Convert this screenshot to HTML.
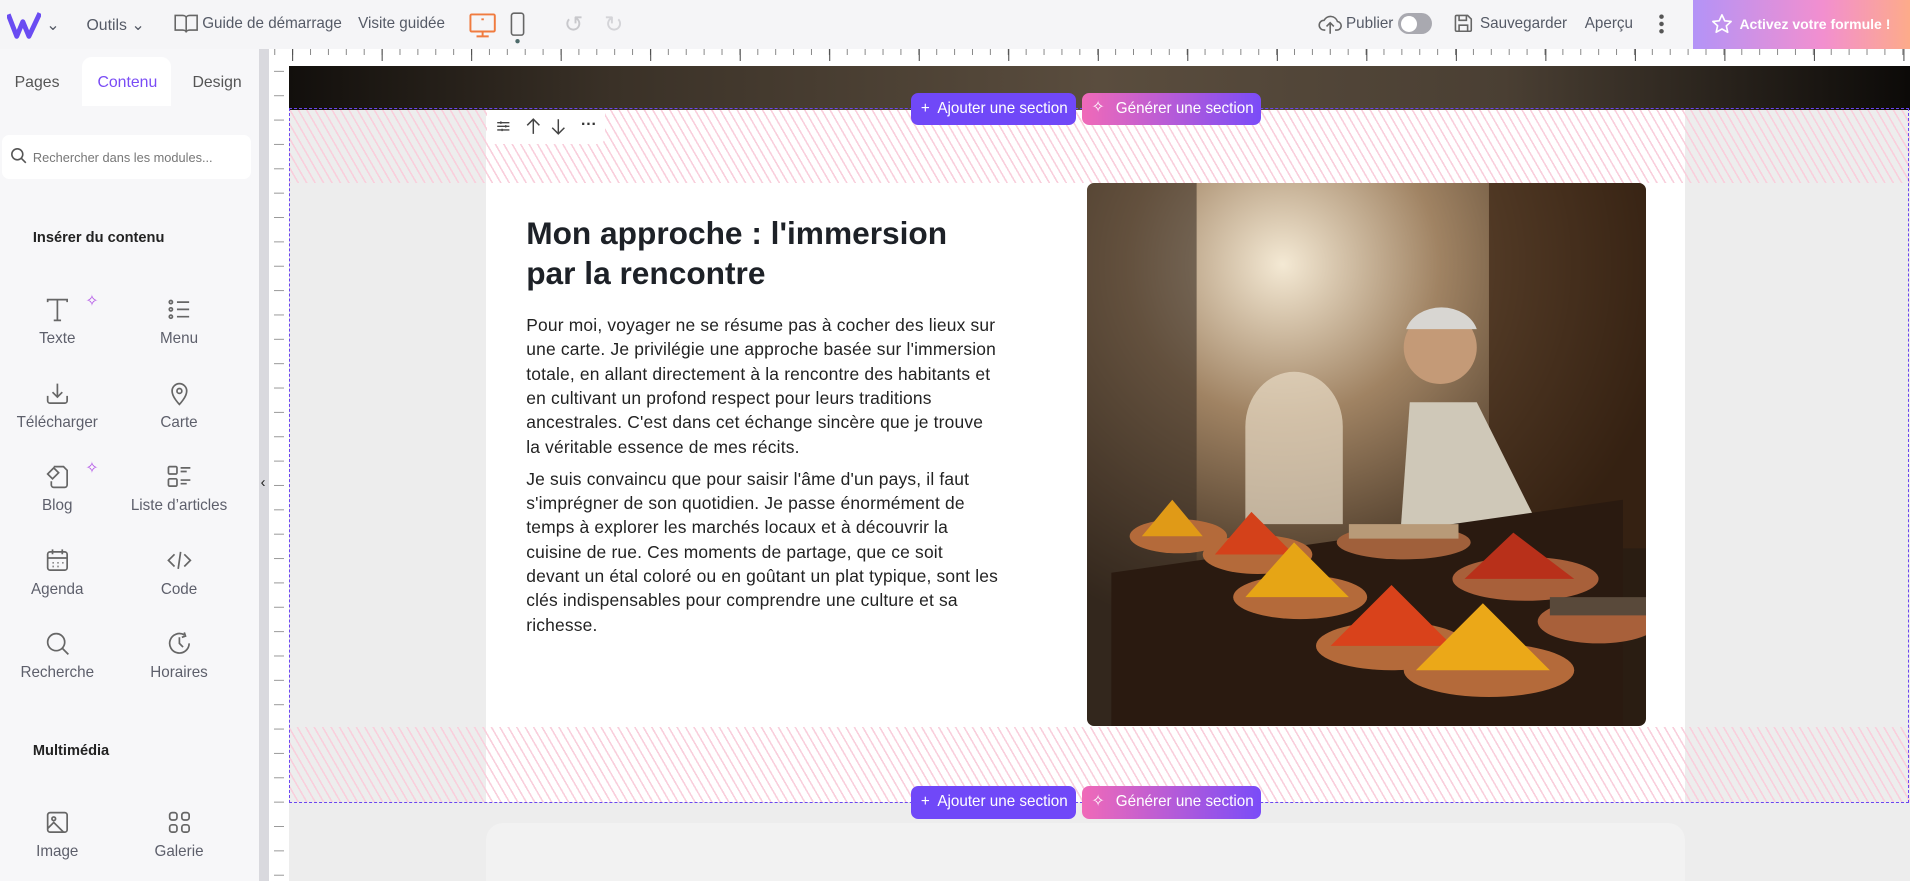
<!DOCTYPE html>
<html><head><meta charset="utf-8"><style>
*{box-sizing:border-box;margin:0;padding:0}
html,body{width:1910px;height:881px;overflow:hidden}
body{zoom:1.2181;font-family:"Liberation Sans",sans-serif;background:#ededed;position:relative;width:1568px;height:723px}
.a{position:absolute}
.top{left:0;top:0;width:1568px;height:40px;background:#f5f5f7}
.tt{font-size:13px;color:#555a66;white-space:nowrap}
.side{left:0;top:40px;width:213px;height:683px;background:#f7f7f9}
.scr{left:213px;top:40px;width:8px;height:683px;background:#d9d9de}
.it{position:absolute;width:100px;text-align:center;font-size:12.5px;color:#5d5f6b}
.it svg{display:block;margin:0 auto 6px}
.hatch{background:repeating-linear-gradient(60deg,#f9cfdc 0 1.3px,transparent 1.3px 6px)}
.btn{height:27px;border-radius:6px;color:#fff;font-size:12.5px;line-height:27px;padding:0 8px;white-space:nowrap;overflow:hidden}
p.b{font-size:14.3px;line-height:20px;color:#222;margin-bottom:6px;letter-spacing:0.15px}
</style></head><body>
<div class="a top"></div>
<svg class="a" style="left:6px;top:10px" width="28" height="22" viewBox="0 0 28 22"><path d="M1 2 L8 20 L13 8 L18 20 L27 1" fill="none" stroke="#6a4cf2" stroke-width="4" stroke-linejoin="round"/></svg>
<div class="a tt" style="left:38px;top:12px">⌄</div>
<div class="a tt" style="left:71px;top:12px">Outils ⌄</div>
<svg class="a" style="left:143px;top:11px" width="20" height="17" viewBox="0 0 20 17"><path d="M1 2h6c2 0 3 1 3 2v12c0-1-1-2-3-2H1zM19 2h-6c-2 0-3 1-3 2v12c0-1 1-2 3-2h6z" fill="none" stroke="#666" stroke-width="1.3"/></svg>
<div class="a tt" style="left:166px;top:12px;font-size:12.5px">Guide de démarrage</div>
<div class="a tt" style="left:294px;top:12px;font-size:12.5px">Visite guidée</div>
<svg class="a" style="left:384px;top:10px" width="24" height="22" viewBox="0 0 24 22"><rect x="2" y="2" width="20" height="14" rx="1" fill="none" stroke="#f07b3f" stroke-width="1.6"/><path d="M12 16v4M7 20h10M11 6h2" stroke="#f07b3f" stroke-width="1.6"/></svg>
<svg class="a" style="left:418px;top:10px" width="14" height="26" viewBox="0 0 14 26"><rect x="2" y="1" width="10" height="18" rx="2" fill="none" stroke="#666" stroke-width="1.3"/><circle cx="7" cy="24" r="1.8" fill="#4d6a6a"/></svg>
<div class="a" style="left:463px;top:9px;font-size:19px;color:#c8c8cc">↺</div>
<div class="a" style="left:496px;top:9px;font-size:19px;color:#d4d4d8">↻</div>
<svg class="a" style="left:1082px;top:11px" width="20" height="18" viewBox="0 0 20 18"><path d="M6 14H5a4 4 0 0 1 0-8 6 6 0 0 1 11 1 3.5 3.5 0 0 1-1 7h-1M10 8v9M7 11l3-3 3 3" fill="none" stroke="#666" stroke-width="1.3"/></svg>
<div class="a tt" style="left:1105px;top:12px;font-size:12.5px">Publier</div>
<div class="a" style="left:1148px;top:11px;width:28px;height:17px;border-radius:9px;background:#a9a9b0"><div style="margin:2px;width:13px;height:13px;border-radius:50%;background:#fff"></div></div>
<svg class="a" style="left:1193px;top:11px" width="17" height="17" viewBox="0 0 17 17"><path d="M2 3a1 1 0 0 1 1-1h9l3 3v9a1 1 0 0 1-1 1H3a1 1 0 0 1-1-1zM5 2v4h6V2M5 15v-5h7v5" fill="none" stroke="#666" stroke-width="1.3"/></svg>
<div class="a tt" style="left:1215px;top:12px;font-size:12.5px">Sauvegarder</div>
<div class="a tt" style="left:1301px;top:12px;font-size:12.5px">Aperçu</div>
<div class="a" style="left:1362px;top:11px;width:4px;height:18px;background:radial-gradient(circle,#555 1.6px,transparent 2px) 0 0/4px 6px"></div>
<div class="a" style="left:1390px;top:0;width:178px;height:40px;background:linear-gradient(90deg,#b393f7,#f28fcf 60%,#fdab8a);color:#fff;font-size:11.5px;font-weight:bold;line-height:40px;padding-left:38px;white-space:nowrap">Activez votre formule !</div>
<svg class="a" style="left:1405px;top:11px" width="18" height="18" viewBox="0 0 24 24"><path d="M12 2l3 6.5 7 .8-5.2 4.8 1.5 7L12 17.5 5.7 21l1.5-7L2 9.3l7-.8z" fill="none" stroke="#fff" stroke-width="1.8" stroke-linejoin="round"/></svg>

<div class="a side"></div>
<div class="a" style="left:67px;top:47px;width:73px;height:40px;background:#fff;border-radius:8px 8px 0 0"></div>
<div class="a" style="left:12px;top:61px;font-size:13px;color:#555">Pages</div>
<div class="a" style="left:80px;top:61px;font-size:13px;color:#7a4cf5">Contenu</div>
<div class="a" style="left:158px;top:61px;font-size:13px;color:#555">Design</div>
<div class="a" style="left:2px;top:111px;width:204px;height:36px;background:#fff;border-radius:6px"></div>
<svg class="a" style="left:8px;top:121px" width="14" height="14" viewBox="0 0 14 14"><circle cx="6" cy="6" r="4.5" fill="none" stroke="#555" stroke-width="1.3"/><path d="M9.5 9.5L13 13" stroke="#555" stroke-width="1.3"/></svg>
<div class="a" style="left:27px;top:123px;font-size:10.5px;color:#777">Rechercher dans les modules...</div>
<div class="a" style="left:27px;top:189px;font-size:12px;font-weight:bold;color:#222">Insérer du contenu</div>
<div class="a" style="left:27px;top:610px;font-size:12px;font-weight:bold;color:#222">Multimédia</div>
<div class="it" style="left:-3px;top:243px"><svg width="22" height="22" viewBox="0 0 22 22" fill="none" stroke="#666" stroke-width="1.4"><path d="M3 5V3h16v2M11 3v17M8 20h6"/></svg>Texte</div>
<div class="it" style="left:97px;top:243px"><svg width="22" height="22" viewBox="0 0 22 22" fill="none" stroke="#666" stroke-width="1.4"><circle cx="4" cy="5" r="1.3"/><circle cx="4" cy="11" r="1.3"/><circle cx="4" cy="17" r="1.3"/><path d="M9 5h10M9 11h10M9 17h10"/></svg>Menu</div>
<div class="it" style="left:-3px;top:312px"><svg width="22" height="22" viewBox="0 0 22 22" fill="none" stroke="#666" stroke-width="1.4"><path d="M11 3v11M7 10l4 4 4-4M3 13v4a2 2 0 0 0 2 2h12a2 2 0 0 0 2-2v-4"/></svg>Télécharger</div>
<div class="it" style="left:97px;top:312px"><svg width="22" height="22" viewBox="0 0 22 22" fill="none" stroke="#666" stroke-width="1.4"><path d="M11 20s-6-6-6-11a6 6 0 0 1 12 0c0 5-6 11-6 11z"/><circle cx="11" cy="9" r="2"/></svg>Carte</div>
<div class="it" style="left:-3px;top:380px"><svg width="22" height="22" viewBox="0 0 22 22" fill="none" stroke="#666" stroke-width="1.4"><path d="M8 3h8l3 3v12a2 2 0 0 1-2 2h-9a2 2 0 0 1-2-2v-3M3 9l5-5 4 4-5 5z"/></svg>Blog</div>
<div class="it" style="left:97px;top:380px"><svg width="22" height="22" viewBox="0 0 22 22" fill="none" stroke="#666" stroke-width="1.4"><rect x="2" y="3" width="7" height="6" rx="1"/><rect x="2" y="13" width="7" height="6" rx="1"/><path d="M12 4h8M12 7h5M12 14h8M12 17h5"/></svg>Liste d’articles</div>
<div class="it" style="left:-3px;top:449px"><svg width="22" height="22" viewBox="0 0 22 22" fill="none" stroke="#666" stroke-width="1.4"><rect x="3" y="4" width="16" height="15" rx="2"/><path d="M3 9h16M7 2v4M15 2v4M7 13h1M11 13h1M15 13h1M7 16h1M11 16h1"/></svg>Agenda</div>
<div class="it" style="left:97px;top:449px"><svg width="22" height="22" viewBox="0 0 22 22" fill="none" stroke="#666" stroke-width="1.4"><path d="M7 6l-5 5 5 5M15 6l5 5-5 5M12 4l-2 14"/></svg>Code</div>
<div class="it" style="left:-3px;top:517px"><svg width="22" height="22" viewBox="0 0 22 22" fill="none" stroke="#666" stroke-width="1.4"><circle cx="10" cy="10" r="7"/><path d="M15 15l5 5"/></svg>Recherche</div>
<div class="it" style="left:97px;top:517px"><svg width="22" height="22" viewBox="0 0 22 22" fill="none" stroke="#666" stroke-width="1.4"><path d="M19 11a8 8 0 1 1-4-7M11 6v5l3 3M15 2l1 3-3 1"/></svg>Horaires</div>
<div class="it" style="left:-3px;top:664px"><svg width="22" height="22" viewBox="0 0 22 22" fill="none" stroke="#666" stroke-width="1.4"><rect x="3" y="3" width="16" height="16" rx="2"/><circle cx="8" cy="8" r="1.5"/><path d="M3 16l5-5 8 8"/></svg>Image</div>
<div class="it" style="left:97px;top:664px"><svg width="22" height="22" viewBox="0 0 22 22" fill="none" stroke="#666" stroke-width="1.4"><rect x="3" y="3" width="6" height="6" rx="2"/><rect x="13" y="3" width="6" height="6" rx="2"/><rect x="3" y="13" width="6" height="6" rx="2"/><rect x="13" y="13" width="6" height="6" rx="2"/></svg>Galerie</div>
<div class="a" style="left:70px;top:239px;color:#b458e8;font-size:13px">✧</div>
<div class="a" style="left:70px;top:376px;color:#b458e8;font-size:13px">✧</div>
<div class="a scr"></div>
<div class="a" style="left:214px;top:390px;font-size:12px;color:#222">‹</div>

<!-- rulers -->
<div class="a" style="left:221px;top:40px;width:1347px;height:14px;background:#fff repeating-linear-gradient(90deg,#888 0 1px,transparent 1px 14.7px);background-size:14.7px 5px;background-repeat:repeat-x;background-position:19px 0"></div>
<div class="a" style="left:221px;top:40px;width:1347px;height:14px;background:repeating-linear-gradient(90deg,#444 0 1px,transparent 1px 73.5px);background-size:73.5px 10px;background-repeat:repeat-x;background-position:19px 0"></div>
<div class="a" style="left:221px;top:54px;width:16px;height:669px;background:#fff repeating-linear-gradient(180deg,#999 0 1px,transparent 1px 20px);background-size:8px 20px;background-repeat:repeat-y;background-position:4px 4px"></div>

<!-- canvas -->
<div class="a" style="left:237px;top:54px;width:1331px;height:36px;background:linear-gradient(90deg,#120f0c,#3a3127 20%,#5a4d3e 50%,#4a3f33 75%,#0c0a08)"></div>
<div class="a" style="left:237px;top:90px;width:1331px;height:568px;background:#ededed"></div>
<div class="a" style="left:399px;top:90px;width:984px;height:568px;background:#fff"></div>
<div class="a hatch" style="left:237px;top:90px;width:1331px;height:60px"></div>
<div class="a hatch" style="left:237px;top:597px;width:1331px;height:61px"></div>
<div class="a" style="left:237px;top:89px;width:1330px;height:570px;border:1.5px dashed #6b46f0"></div>
<div class="a" style="left:399px;top:676px;width:984px;height:47px;background:#f2f2f2;border-radius:14px 14px 0 0"></div>

<div class="a" style="left:400px;top:90px;width:97px;height:28px;background:#fff;border-radius:0 0 6px 6px;font-size:13px;color:#333">
<svg class="a" style="left:7px;top:8px" width="12" height="12" viewBox="0 0 12 12" fill="none" stroke="#444" stroke-width="1.1"><path d="M1 3h10M1 6h10M1 9h10M4 2v2M8 5v2M5 8v2"/></svg>
<svg class="a" style="left:32px;top:7px" width="12" height="14" viewBox="0 0 12 14" fill="none" stroke="#444" stroke-width="1.2"><path d="M6 13V1M1 6l5-5 5 5"/></svg>
<svg class="a" style="left:52px;top:7px" width="12" height="14" viewBox="0 0 12 14" fill="none" stroke="#444" stroke-width="1.2"><path d="M6 1v12M1 8l5 5 5-5"/></svg>
<span class="a" style="left:77px;top:5px;font-weight:bold">···</span></div>
<div class="a btn" style="left:748px;top:76px;width:135px;background:#7048f8">+&nbsp; Ajouter une section</div>
<div class="a btn" style="left:888px;top:76px;width:147px;background:linear-gradient(90deg,#f06ab8,#7a4cf8);padding-left:28px">Générer une section</div>
<div class="a" style="left:896px;top:80px;color:#fff;font-size:13px">✧</div>
<div class="a btn" style="left:748px;top:645px;width:135px;background:#7048f8">+&nbsp; Ajouter une section</div>
<div class="a btn" style="left:888px;top:645px;width:147px;background:linear-gradient(90deg,#f06ab8,#7a4cf8);padding-left:28px">Générer une section</div>
<div class="a" style="left:896px;top:649px;color:#fff;font-size:13px">✧</div>

<div class="a" style="left:432px;top:175px;width:370px;font-size:26px;font-weight:bold;line-height:33px;color:#1d2127">Mon approche : l'immersion par la rencontre</div>
<div class="a" style="left:432px;top:257px;width:388px">
<p class="b">Pour moi, voyager ne se résume pas à cocher des lieux sur une carte. Je privilégie une approche basée sur l'immersion totale, en allant directement à la rencontre des habitants et en cultivant un profond respect pour leurs traditions ancestrales. C'est dans cet échange sincère que je trouve la véritable essence de mes récits.</p>
<p class="b">Je suis convaincu que pour saisir l'âme d'un pays, il faut s'imprégner de son quotidien. Je passe énormément de temps à explorer les marchés locaux et à découvrir la cuisine de rue. Ces moments de partage, que ce soit devant un étal coloré ou en goûtant un plat typique, sont les clés indispensables pour comprendre une culture et sa richesse.</p>
</div>

<svg class="a" style="left:892px;top:150px;border-radius:6px" width="459" height="446" viewBox="0 0 459 446">
<defs><radialGradient id="g" cx="0.35" cy="0.15" r="0.7"><stop offset="0" stop-color="#f4e9d4"/><stop offset="0.4" stop-color="#a08363"/><stop offset="1" stop-color="#2a1d12"/></radialGradient></defs>
<rect width="459" height="446" fill="url(#g)"/>
<rect x="0" y="0" width="90" height="446" fill="#3a2e24" opacity="0.6"/>
<rect x="330" y="0" width="129" height="300" fill="#3a2412" opacity="0.7"/>
<path d="M130 200a40 45 0 0 1 80 0v80h-80z" fill="#e8dcc6" opacity="0.7"/>
<path d="M265 180h55l70 140H255z" fill="#cfc8b8"/>
<circle cx="290" cy="135" r="30" fill="#c49a77"/>
<path d="M262 120a30 24 0 0 1 58 0" fill="#d8d6d2"/>
<path d="M20 320l420-60v186H20z" fill="#2a1a10"/>
<ellipse cx="75" cy="290" rx="40" ry="14" fill="#b46a3a"/><path d="M45 290l25-30 25 30z" fill="#e09a17"/>
<ellipse cx="140" cy="305" rx="45" ry="16" fill="#b46a3a"/><path d="M105 305l30-35 35 35z" fill="#d4411a"/>
<ellipse cx="175" cy="340" rx="55" ry="18" fill="#b46a3a"/><path d="M130 340l40-45 45 45z" fill="#e6a515"/>
<ellipse cx="250" cy="380" rx="62" ry="20" fill="#b46a3a"/><path d="M200 380l50-50 50 50z" fill="#d9421b"/>
<ellipse cx="330" cy="400" rx="70" ry="22" fill="#b46a3a"/><path d="M270 400l55-55 55 55z" fill="#eba818"/>
<ellipse cx="360" cy="325" rx="60" ry="18" fill="#a8603a"/><path d="M310 325l40-38 50 38z" fill="#b8301a"/>
<ellipse cx="420" cy="360" rx="50" ry="18" fill="#a8603a"/><path d="M380 355h80v-15h-80z" fill="#59493a"/>
<ellipse cx="260" cy="295" rx="55" ry="14" fill="#a0603b"/><path d="M215 292h90v-12h-90z" fill="#b89a78"/>
</svg>
</body></html>
